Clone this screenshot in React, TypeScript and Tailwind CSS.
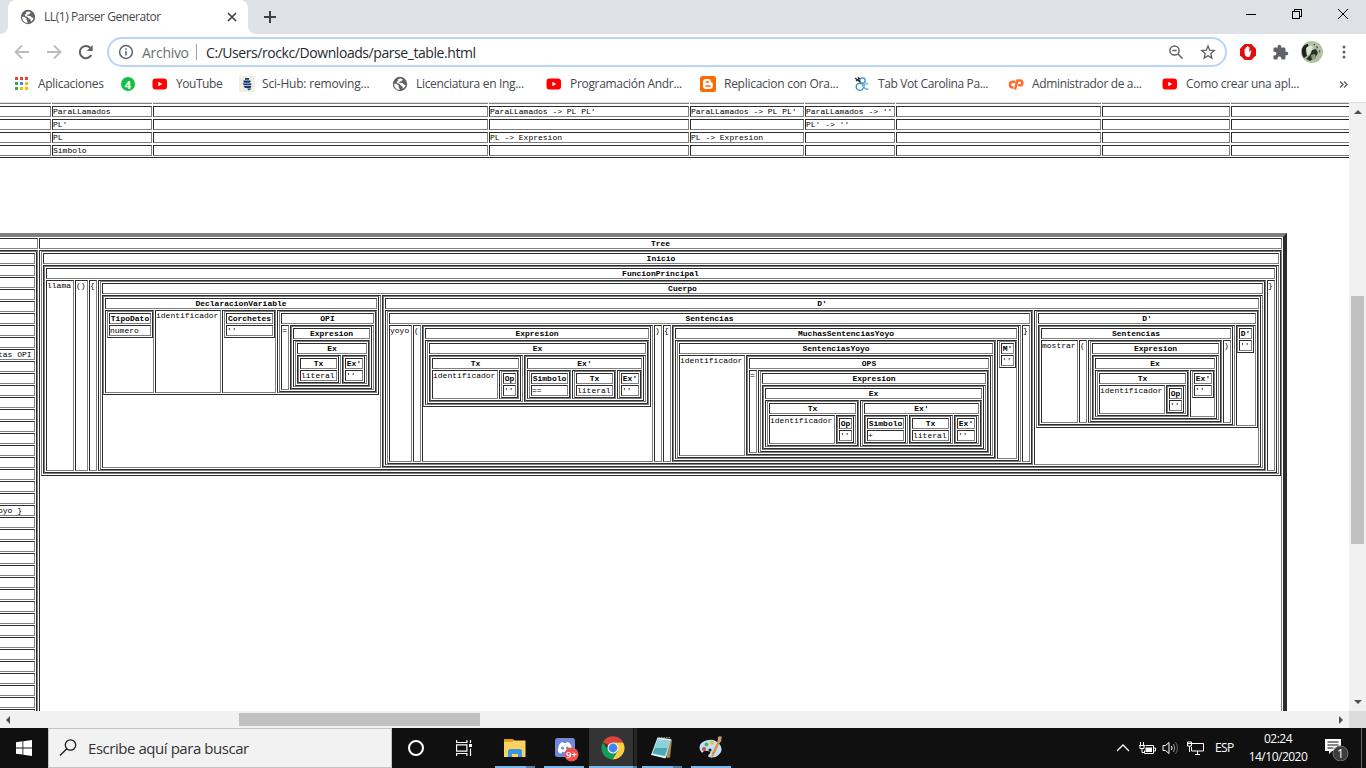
import type { ReactNode } from "react";

type Side = "l" | "r";
type Cell = { w?: number; pad?: Side; c: string | Node };
type Node = { h: string; row: Cell[] };

const leaf = (h: string, t: string): Node => ({ h, row: [{ c: t }] });
const txt = (c: string, w: number): Cell => ({ c, w });
const sub = (pad: Side, h: string, row: Cell[], w?: number): Cell => ({ pad, w, c: { h, row } });
const end = (pad: Side, h: string, t: string, w: number): Cell => ({ pad, w, c: leaf(h, t) });

const tree: Node = {
  h: "Inicio",
  row: [
    sub("r", "FuncionPrincipal", [
      txt("llama", 28),
      txt("()", 13),
      txt("{", 8),
      sub("l", "Cuerpo", [
        sub("r", "DeclaracionVariable", [
          end("l", "TipoDato", "numero", 49),
          txt("identificador", 66),
          end("l", "Corchetes", "''", 54),
          sub("l", "OPI", [
            txt("=", 8),
            sub("r", "Expresion", [
              sub("l", "Ex", [end("r", "Tx", "literal", 44), end("r", "Ex'", "''", 25)]),
            ], 84),
          ], 100),
        ], 279),
        sub("r", "D'", [
          sub("l", "Sentencias", [
            txt("yoyo", 23),
            txt("(", 8),
            sub("r", "Expresion", [
              sub("l", "Ex", [
                sub("r", "Tx", [txt("identificador", 66), end("l", "Op", "''", 20)], 94),
                sub("r", "Ex'", [
                  end("l", "Simbolo", "==", 44),
                  end("l", "Tx", "literal", 44),
                  end("l", "Ex'", "''", 25),
                ], 122),
              ]),
            ], 231),
            txt(")", 8),
            txt("{", 8),
            sub("r", "MuchasSentenciasYoyo", [
              sub("l", "SentenciasYoyo", [
                txt("identificador", 66),
                sub("r", "OPS", [
                  txt("=", 8),
                  sub("l", "Expresion", [
                    sub("r", "Ex", [
                      sub("l", "Tx", [txt("identificador", 66), end("r", "Op", "''", 20)], 94),
                      sub("l", "Ex'", [
                        end("r", "Simbolo", "+", 44),
                        end("r", "Tx", "literal", 44),
                        end("r", "Ex'", "''", 25),
                      ], 122),
                    ]),
                  ], 231),
                ], 247),
              ], 321),
              end("l", "M'", "''", 20),
            ], 349),
            txt("}", 8),
          ], 648),
          sub("l", "D'", [
            sub("r", "Sentencias", [
              txt("mostrar", 37),
              txt("(", 8),
              sub("l", "Expresion", [
                sub("r", "Ex", [
                  sub("l", "Tx", [txt("identificador", 66), end("r", "Op", "''", 20)], 94),
                  end("l", "Ex'", "''", 25),
                ]),
              ], 134),
              txt(")", 8),
            ], 197),
            end("r", "D'", "''", 20),
          ], 225),
        ], 881),
      ], 1168),
      txt("}", 8),
    ]),
  ],
};

const inset = "border border-t-[#2c2c2c] border-l-[#2c2c2c] border-b-[#808080] border-r-[#808080]";
const outset = "border border-t-[#808080] border-l-[#808080] border-b-[#2c2c2c] border-r-[#2c2c2c]";

function Head({ children }: { children: ReactNode }) {
  return <div className={`${inset} h-[11px] text-center font-bold whitespace-nowrap`}>{children}</div>;
}

function NodeTable({ node }: { node: Node }) {
  return (
    <div className={`${outset} flex min-w-0 grow flex-col gap-px self-start p-px`}>
      <Head>{node.h}</Head>
      <div className="flex gap-px">
        {node.row.map((cell, i) => (
          <div
            key={i}
            style={{ width: cell.w }}
            className={`${inset} flex min-h-[11px] ${cell.w ? "shrink-0" : "min-w-0 flex-1"} ${
              cell.pad === "l" ? "pl-px" : cell.pad === "r" ? "pr-px" : ""
            }`}
          >
            {typeof cell.c === "string" ? <span className="whitespace-nowrap">{cell.c}</span> : <NodeTable node={cell.c} />}
          </div>
        ))}
      </div>
    </div>
  );
}

const columns = [61, 100, 335, 200, 114, 90, 205, 128, 130];
const grammar: string[][] = [
  ["", "ParaLLamados", "", "ParaLLamados -> PL PL'", "ParaLLamados -> PL PL'", "ParaLLamados -> ''", "", "", ""],
  ["", "PL'", "", "", "", "PL' -> ''", "", "", ""],
  ["", "PL", "", "PL -> Expresion", "PL -> Expresion", "", "", "", ""],
  ["", "Simbolo", "", "", "", "", "", "", ""],
];

function GrammarTable() {
  return (
    <div className="-ml-[10px] flex w-[1372px] shrink-0 flex-col gap-[2px]">
      <div className="flex h-px gap-px">
        {columns.map((w, i) => (
          <div key={i} style={{ width: w }} className="shrink-0 bg-[#808080]" />
        ))}
      </div>
      {grammar.map((row, r) => (
        <div key={r} className="flex gap-px">
          {row.map((t, i) => (
            <div key={i} style={{ width: columns[i] }} className={`${inset} h-[11px] shrink-0 whitespace-nowrap`}>
              {t}
            </div>
          ))}
        </div>
      ))}
      <div className="-mt-px h-px bg-[#2c2c2c]" />
    </div>
  );
}

const trace = Array.from({ length: 40 }, (_, i) => (i === 8 ? "tas OPI" : i === 21 ? "oyo }" : ""));

function ParseTable() {
  return (
    <div className="mt-[75px] -ml-[10px] flex w-[1297px] shrink-0 flex-col gap-px border-t-4 border-r-4 border-t-[#808080] border-r-[#2c2c2c] p-px pl-0">
      <div className="flex gap-px">
        <div className={`${inset} h-[11px] w-[48px] shrink-0`} />
        <div className="flex-1">
          <Head>Tree</Head>
        </div>
      </div>
      <div className="flex gap-px">
        <div className={`${inset} w-[48px] shrink-0`}>
          <div className={`${outset} flex flex-col gap-px p-px pl-0`}>
            {trace.map((t, i) => (
              <div key={i} className={`${inset} h-[11px] pl-[5px] whitespace-nowrap`}>
                {t}
              </div>
            ))}
          </div>
        </div>
        <div className={`${inset} flex flex-1 pl-px`}>
          <NodeTable node={tree} />
        </div>
      </div>
    </div>
  );
}

function Globe() {
  return (
    <svg viewBox="0 0 16 16" className="size-4">
      <circle cx="8" cy="8" r="7.2" fill="#5f6368" />
      <path d="M2.2 7.4 5 8.2l1.8 1.5-.3 1.3 1.2 1.9-.2 1C4.4 13.8 2 11.300 2.200 7.400Z" fill="#fff" />
      <path d="M6.200 3.100 9 2.400l1.800 1L9.500 5.200l-2 .4-.4 1.200 3.200.2 1.500 1.600 1.700.3c-.3 1.700-1.300 3-2.700 3.800l-.4-2.400-1.900-1-1.100-1.500-2.200-.5-.6-1.600 1.500-.9Z" fill="#fff" />
    </svg>
  );
}

function YouTube() {
  return (
    <svg viewBox="0 0 16 16" className="size-4">
      <rect x="0.500" y="2.500" width="14.500" height="11" rx="3" fill="#f00" />
      <path d="M6.300 5.700v4.600L10.300 8Z" fill="#fff" />
    </svg>
  );
}

function Apps() {
  const c = ["#ea4335", "#ea4335", "#ea4335", "#34a853", "#4285f4", "#fbbc04", "#34a853", "#fbbc04", "#fbbc04"];
  return (
    <svg viewBox="0 0 16 16" className="size-4" shapeRendering="crispEdges">
      {c.map((f, i) => (
        <rect key={i} x={(i % 3) * 5} y={1 + Math.floor(i / 3) * 5} width="3" height="3" fill={f} />
      ))}
    </svg>
  );
}

function Whats() {
  return (
    <div className="flex size-[14px] items-center justify-center rounded-full bg-[#11bf42] font-['Open_Sans',sans-serif] text-[11px] leading-none font-bold text-white">4</div>
  );
}

function SciHub() {
  return (
    <svg viewBox="0 0 16 16" className="size-4">
      <path fill="#f0efe2" d="M0 0h16v16H0Z" />
      <path d="M6 2h4v1.800H6ZM4.500 4.500h7v1.800l-1 .4h-6ZM3.500 7.500h9L12 9.300H5ZM4.500 10h8l-1 1.900H6ZM8 12.500h4.500L10 14.500Z" fill="#14357a" />
    </svg>
  );
}

function Blogger() {
  return (
    <svg viewBox="0 0 16 16" className="size-4">
      <rect width="16" height="16" rx="2.500" fill="#ff6a00" />
      <path d="M6 3h2.500C10.500 3 11 4.500 11 6c0 .700 1.800 0 1.800 1.500V10c0 2-1 3-3 3H6c-2 0-3-1-3-3V6c0-2 1-3 3-3Z" fill="#fff" />
      <path d="M6 6h2.500M6 10h4" stroke="#ff6a00" strokeWidth="1.400" strokeLinecap="round" />
    </svg>
  );
}

function TabVot() {
  return (
    <svg viewBox="0 0 16 16" className="size-4" fill="none">
      <circle cx="8.500" cy="4.500" r="2.700" stroke="#3a8fc4" strokeWidth="1.300" />
      <circle cx="5.800" cy="10.800" r="3.600" stroke="#3a8fc4" strokeWidth="1.400" />
      <path d="M14.500 8.300a2.700 2.700 0 1 0 0 4.200M9 8l1 5" stroke="#6bb2dc" strokeWidth="1.300" />
      <path d="m1 2 5 4M2 5l4-3M4 1l2 5" stroke="#333" strokeWidth="1.200" />
    </svg>
  );
}

function CPanel() {
  return (
    <svg viewBox="0 0 16 16" className="size-4" fill="none" stroke="#ff6c2c" strokeWidth="2.500">
      <path d="M7.500 5.800H4.300a2.900 2.900 0 0 0 0 5.700h1.200M7 13.500 9.500 4.500H12a2.400 2.400 0 0 1 0 4.800h-1.800" />
    </svg>
  );
}

const bookmarks: { icon: ReactNode; label: string; box: string; text: string }[] = [
  { icon: <Apps />, label: "Aplicaciones", box: "w-[106px]", text: "ml-[7px] tracking-[-0.3px]" },
  { icon: <Whats />, label: "", box: "w-[31px]", text: "" },
  { icon: <YouTube />, label: "YouTube", box: "w-[87px]", text: "ml-2 tracking-[-0.45px]" },
  { icon: <SciHub />, label: "Sci-Hub: removing...", box: "w-[153px]", text: "ml-[7px] tracking-[-0.2px]" },
  { icon: <Globe />, label: "Licenciatura en Ing...", box: "w-[154px]", text: "ml-2 tracking-[-0.32px]" },
  { icon: <YouTube />, label: "Programación Andr...", box: "w-[154px]", text: "ml-2 tracking-[-0.32px]" },
  { icon: <Blogger />, label: "Replicacion con Ora...", box: "w-[154px]", text: "ml-2 tracking-[-0.27px]" },
  { icon: <TabVot />, label: "Tab Vot Carolina Pa...", box: "w-[154px]", text: "ml-2 tracking-[-0.38px]" },
  { icon: <CPanel />, label: "Administrador de a...", box: "w-[154px]", text: "ml-2 tracking-[-0.35px]" },
  { icon: <YouTube />, label: "Como crear una apl...", box: "w-[177px]", text: "ml-2 tracking-[-0.3px]" },
];

function TabStrip() {
  return (
    <div className="flex h-[34px] shrink-0 bg-[#dee1e6]">
      <div className="flex w-2 items-end bg-white">
        <div className="h-full w-2 rounded-br-lg bg-[#dee1e6]" />
      </div>
      <div className="bg-[#dee1e6]">
        <div className="flex h-[34px] w-[240px] items-center rounded-t-lg bg-white pl-3">
          <Globe />
          <span className="ml-2 w-[183px] text-[12px] tracking-[-0.44px] whitespace-nowrap text-[#45494d]">LL(1) Parser Generator</span>
          <svg viewBox="0 0 10 10" className="size-[10px] shrink-0" stroke="#3c4043" strokeWidth="1.700">
            <path d="m1 1 8 8M9 1 1 9" />
          </svg>
        </div>
      </div>
      <div className="w-2 bg-white">
        <div className="h-full rounded-bl-lg bg-[#dee1e6]" />
      </div>
      <svg viewBox="0 0 12 12" className="mt-[11px] ml-2 size-3" stroke="#3c4043" strokeWidth="2" shapeRendering="crispEdges">
        <path d="M6 0v12M0 6h12" />
      </svg>
      <div className="ml-auto flex pt-[9px] pr-[18px]">
        <svg viewBox="0 0 10 10" className="mr-9 size-[10px]" stroke="#000" shapeRendering="crispEdges">
          <path d="M0 5.500h10" />
        </svg>
        <svg viewBox="0 0 10 10" className="mr-9 size-[10px]" stroke="#000" fill="none" shapeRendering="crispEdges">
          <path d="M.5 2.500h7v7h-7ZM2.500 2.500v-2h7v7h-2" />
        </svg>
        <svg viewBox="0 0 10 10" className="size-[10px]" stroke="#000">
          <path d="m0 0 10 10M10 0 0 10" />
        </svg>
      </div>
    </div>
  );
}

function Toolbar() {
  return (
    <div className="flex h-[36px] shrink-0 items-center bg-white pl-[14px]">
      <svg viewBox="0 0 16 16" className="size-4" fill="none" stroke="#babcbe" strokeWidth="1.800">
        <path d="M15 8H2M8 1.500 1.500 8 8 14.500" />
      </svg>
      <svg viewBox="0 0 16 16" className="ml-4 size-4" fill="none" stroke="#babcbe" strokeWidth="1.800">
        <path d="M1 8h13M8 1.500 14.500 8 8 14.500" />
      </svg>
      <svg viewBox="0 0 16 16" className="ml-4 size-4" fill="none">
        <path d="M13.300 11A6.100 6.100 0 1 1 12.300 3.800" stroke="#5f6368" strokeWidth="2" />
        <path d="M14.700 1v6H8.700Z" fill="#5f6368" />
      </svg>
      <div className="ml-[13px] flex h-[30px] w-[1120px] items-center rounded-full border-2 border-[#b9d4f9] pl-[9px]">
        <svg viewBox="0 0 16 16" className="size-4" fill="none" stroke="#5f6368" strokeWidth="1.500">
          <circle cx="8" cy="8" r="6.400" />
          <path d="M8 7v4.500M8 4.300v1.500" />
        </svg>
        <span className="ml-2 w-[47px] text-[14px] tracking-[-0.3px] text-[#6b6f73]">Archivo</span>
        <span className="mx-[7px] h-4 w-px bg-[#9aa0a6]" />
        <span className="ml-[2px] text-[14px] tracking-[-0.43px] whitespace-nowrap text-[#26292d]">C:/Users/rockc/Downloads/parse_table.html</span>
        <svg viewBox="0 0 16 16" className="ml-auto size-4" fill="none" stroke="#5f6368" strokeWidth="1.500">
          <circle cx="6.500" cy="6.500" r="4.600" />
          <path d="m10 10 4.500 4.500M4.300 6.500h4.400" />
        </svg>
        <svg viewBox="0 0 16 16" className="mr-[9px] ml-4 size-4" fill="none" stroke="#5f6368" strokeWidth="1.400">
          <path d="m8 2 1.700 4.200 4.500.4-3.400 3 1 4.400L8 11.700 4.200 14l1-4.400-3.400-3 4.500-.4Z" />
        </svg>
      </div>
      <svg viewBox="0 0 16 16" className="ml-[13px] size-4">
        <path d="M4.700 0h6.600L16 4.700v6.600L11.300 16H4.700L0 11.300V4.700Z" fill="#e40d0d" />
        <path d="M4.600 8.500V5q.6-.8 1.200 0v2.300-4q.6-.8 1.200 0v3.500-4.300q.6-.8 1.200 0v4.300-3.700q.6-.8 1.200 0v5.200l1-1.500q1-.6 1 .3L9.800 12.500q-1.200 1-3.400.3-1.800-1-1.800-4.300Z" fill="#fff" />
      </svg>
      <svg viewBox="0 0 24 24" className="ml-4 size-[17px]" fill="#5f6368">
        <path d="M20.500 11H19V7a2 2 0 0 0-2-2h-4V3.500a2.500 2.500 0 0 0-5 0V5H4a2 2 0 0 0-2 2v3.800h1.500a2.700 2.700 0 0 1 0 5.400H2V20a2 2 0 0 0 2 2h3.800v-1.500a2.700 2.700 0 0 1 5.400 0V22H17a2 2 0 0 0 2-2v-4h1.500a2.500 2.500 0 0 0 0-5Z" />
      </svg>
      <svg viewBox="0 0 22 22" className="ml-[12px] size-[22px]">
        <circle cx="11" cy="11" r="11" fill="#b4c2a2" />
        <path d="M1 8q2-5 6-5l1 4-3 2 1 6-3 2q-3-4-2-9Z" fill="#1c2420" />
        <path d="M5 7q4-4 7-1l-1 6-5 2Z" fill="#dde4cf" />
        <path d="m11 9 4-1 2 4-3 5-5 3-4-2 4-4Z" fill="#28332b" />
        <path d="m15 5 2 1-1 2ZM12 3h2v1.500ZM18 9l1.500 1-1 2Z" fill="#303b32" />
        <path d="m10 14 4-1 1 4-4 2Z" fill="#8c9b78" />
      </svg>
      <svg viewBox="0 0 4 14" className="ml-[19px] h-[14px] w-1" fill="#5f6368">
        <circle cx="2" cy="2" r="1.500" />
        <circle cx="2" cy="7" r="1.500" />
        <circle cx="2" cy="12" r="1.500" />
      </svg>
    </div>
  );
}

function Bookmarks() {
  return (
    <div className="flex h-[33px] shrink-0 items-center border-b border-[#dcdee0] bg-white pb-1 pl-[15px] text-[12px] text-[#45494d]">
      {bookmarks.map((b, i) => (
        <div key={i} className={`flex shrink-0 items-center ${b.box}`}>
          {b.icon}
          <span className={`whitespace-nowrap ${b.text}`}>{b.label}</span>
        </div>
      ))}
      <svg viewBox="0 0 9 7" className="h-[7px] w-[9px]" fill="none" stroke="#5f6368" strokeWidth="1.500">
        <path d="m1 .5 3 3-3 3M5 .5l3 3-3 3" />
      </svg>
    </div>
  );
}

function Taskbar() {
  return (
    <div className="flex h-10 shrink-0 items-stretch bg-[#101010] text-white">
      <div className="flex w-12 items-center justify-center">
        <svg viewBox="0 0 16 16" className="size-4" fill="#fff">
          <path d="M0 2.200 6.500 1.300v6.200H0ZM7.300 1.200 16 0v7.500H7.300ZM0 8.400h6.500v6.200L0 13.700ZM7.300 8.400H16V16l-8.700-1.200Z" />
        </svg>
      </div>
      <div className="flex w-[344px] items-center border border-[#c4c4c4] bg-[#f2f2f2] pl-[10px]">
        <svg viewBox="0 0 18 18" className="size-[18px]" fill="none" stroke="#1c1c1c" strokeWidth="1.300">
          <circle cx="11.500" cy="6" r="5.200" />
          <path d="M7.800 9.700 1 16.500" />
        </svg>
        <span className="ml-[11px] text-[15px] tracking-[-0.45px] whitespace-nowrap text-[#333]">Escribe aquí para buscar</span>
      </div>
      <div className="flex w-12 items-center justify-center">
        <div className="size-4 rounded-full border-2 border-white" />
      </div>
      <div className="flex w-12 items-center justify-center">
        <svg viewBox="0 0 16 16" className="size-4" fill="none" stroke="#fff" strokeWidth="1.200">
          <path d="M.6 0v2.500h10.300V0M.6 4.800h10.300v6.400H.6ZM.6 16v-2.500h10.300V16M14.500 0v3M14.500 8.500V16" />
          <path d="M13 4h3v3h-3Z" fill="#fff" stroke="none" />
        </svg>
      </div>
      <div className="ml-[7px] flex w-10 flex-col items-center">
        <svg viewBox="0 0 22 18" className="mt-[11px] h-[18px] w-[22px]">
          <path d="M0 0h9l1 1.500h11.500V18H0Z" fill="#f9d262" />
          <path d="M0 0h9v2.700H0Z" fill="#e29a08" />
          <path d="M4 18v-6.500L5.500 10h11l1.500 1.500V18h-4v-3H8v3Z" fill="#3a96dd" />
        </svg>
        <div className="mt-auto flex h-[2px] w-full bg-[#76b9ed]"><div className="ml-auto w-[9px] bg-[#5582a5]" /></div>
      </div>
      <div className="ml-[9px] flex w-10 flex-col items-center">
        <svg viewBox="0 0 24 24" className="mt-[10px] ml-[5px] size-6">
          <rect x="0" y="0" width="20" height="19" rx="2.500" fill="#7289da" />
          <path d="M4 7q1.500-3 4-3l.6 1h2.800l.6-1q2.500 0 4 3 1.500 4 1 7-1.500 1.500-3.500 1.500l-1-1.500h-5l-1 1.500Q4.500 15.500 3 14q-.5-3 1-7Z" fill="#fff" />
          <circle cx="7.600" cy="10" r="1.500" fill="#7289da" />
          <circle cx="12.400" cy="10" r="1.500" fill="#7289da" />
          <circle cx="16.500" cy="16.500" r="7" fill="#f04f51" />
          <text x="16.500" y="20" textAnchor="middle" fontSize="9.500" fill="#fff" className="font-['Open_Sans',sans-serif] font-semibold">9+</text>
        </svg>
        <div className="mt-auto h-[2px] w-full bg-[#76b9ed]" />
      </div>
      <div className="ml-[5px] flex w-12 flex-col items-center bg-[linear-gradient(to_right,#343434_44px,#101010_44px,#101010_45px,#262626_45px)]">
        <svg viewBox="0 0 24 24" className="mt-2 size-6">
          <path d="M12 12 2 5.900A11.500 11.500 0 0 1 22.100 6.500H12Z" fill="#db4437" />
          <path d="M22.100 6.500A11.500 11.500 0 0 1 11.500 23.500L16.800 14.800 12 6.500Z" fill="#ffcd40" />
          <path d="M2 6.200A11.500 11.500 0 0 0 11.500 23.500l5.200-8.700-9.500 0Z" fill="#0f9d58" />
          <circle cx="12" cy="12" r="5.600" fill="#f1f1f1" />
          <circle cx="12" cy="12" r="4.400" fill="#4285f4" />
        </svg>
        <div className="mt-auto flex h-[2px] w-full bg-[#76b9ed]"><div className="ml-auto w-[4px] bg-[#5582a5]" /></div>
      </div>
      <div className="ml-[5px] flex w-10 flex-col items-center">
        <svg viewBox="0 0 24 24" className="mt-2 size-6">
          <path d="m8 2 14 1.500-2 18-3 .5Z" fill="#a8895a" />
          <path d="M7.500 1.500 21 3 15.500 22.500 1 19Z" fill="#d9eef0" />
          <path d="M8 3.500 20 5l-5 15L2.500 17.500Z" fill="#4ba9b6" />
          <path d="M8 3.500 20 5l-2.500 7L5 12Z" fill="#8ed2da" />
          <path d="M8.500 1.500h12" stroke="#888" strokeDasharray="1.500 1" />
        </svg>
        <div className="mt-auto flex h-[2px] w-full bg-[#76b9ed]"><div className="ml-auto w-[9px] bg-[#5582a5]" /></div>
      </div>
      <div className="ml-[9px] flex w-10 flex-col items-center">
        <svg viewBox="0 0 24 24" className="mt-2 size-6">
          <path d="M1 14Q-1 7 7 4.500T20 7.500Q25 13 20.500 18T10 21q-2-1 .5-3t-1.500-3-5 1-3-2Z" fill="#bfe0f5" />
          <circle cx="5" cy="13" r="2" fill="#e0413a" />
          <circle cx="7.500" cy="8.500" r="2" fill="#55b559" />
          <circle cx="13" cy="6.800" r="2" fill="#f5b82e" />
          <circle cx="11" cy="14" r="1.600" fill="#16242e" />
          <path d="m12 23 1-6 6-12 2 1-5.500 12Z" fill="#e58e31" />
          <path d="m18.500 6 .5-5q2-1.500 4 0l-1 3 .5 1-2 2Z" fill="#c99c6b" />
        </svg>
        <div className="mt-auto h-[2px] w-full bg-[#76b9ed]" />
      </div>
      <div className="ml-auto flex items-center">
        <svg viewBox="0 0 14 8" className="h-2 w-[14px]" fill="none" stroke="#fff" strokeWidth="1.300">
          <path d="m1 7 6-6 6 6" />
        </svg>
        <svg viewBox="0 0 17 14" className="ml-[9px] h-[14px] w-[17px]" fill="none" stroke="#fff">
          <path d="M1.500 1v3M4.500 1v3M0 4.500h6M1 5v2.500h4V5M3 8v3.500h2M6.500 4.500h8v8h-9v-3M14.500 7h2v3h-2" />
          <path d="M6.500 6.500H13V11H6.500Z" fill="#fff" stroke="none" />
        </svg>
        <svg viewBox="0 0 17 16" className="ml-[6px] h-4 w-[17px]" fill="none" stroke="#fff">
          <path d="M1 5.500h2.500l3.500-3v11l-3.500-3H1Z" />
          <path d="M9.500 6q1 2 0 4" />
          <path d="M11.500 4q2.500 4 0 8" stroke="#999" />
          <path d="M13.500 2q4 6 0 12" stroke="#666" />
        </svg>
        <svg viewBox="0 0 17 14" className="ml-[8px] h-[14px] w-[17px]" fill="none" stroke="#fff">
          <path d="M5 2.500h11.500v7.500H4.500V6M8 13.500h5M10.500 10v3M.5 1h4v4h-4ZM2.500 5v6M1 2.500h3" />
        </svg>
        <span className="ml-[11px] w-[20px] text-[12px] tracking-[-0.6px]">ESP</span>
        <div className="ml-[13px] flex w-[60px] flex-col items-center text-[12px] leading-[18px] tracking-[-0.5px]">
          <span>02:24</span>
          <span>14/10/2020</span>
        </div>
        <svg viewBox="0 0 26 26" className="ml-[15px] size-[26px]">
          <path d="M2 4h16v12H9l-3 3v-3H2Z" fill="#fff" />
          <path d="M4.500 7h11M4.500 10h11M4.500 13h6" stroke="#101010" />
          <circle cx="17.500" cy="18.500" r="7.500" fill="#3c3c3c" stroke="#777" />
          <text x="17.500" y="23" textAnchor="middle" fontSize="12" fill="#fff">1</text>
        </svg>
        <div className="ml-[12px] h-10 w-px bg-[#666]" />
        <div className="w-1" />
      </div>
    </div>
  );
}

export default function App() {
  return (
    <div className="flex h-[768px] w-[1366px] flex-col overflow-hidden bg-white font-['Open_Sans','Noto_Sans',sans-serif]">
      <TabStrip />
      <Toolbar />
      <Bookmarks />
      <div className="flex h-[608px] shrink-0">
        <div className="flex w-[1349px] flex-col overflow-hidden bg-white font-['Liberation_Mono',monospace] text-[8px] leading-[9px] text-black">
          <GrammarTable />
          <ParseTable />
        </div>
        <div className="flex w-[17px] flex-col items-center bg-[#f1f1f1] py-[5px]">
          <svg viewBox="0 0 8 4" className="mt-[2px] h-1 w-2" fill="#505050"><path d="m4 0 4 4H0Z" /></svg>
          <div className="mt-[182px] h-[248px] w-[13px] bg-[#c1c1c1]" />
          <svg viewBox="0 0 8 4" className="mt-auto mb-[2px] h-1 w-2" fill="#505050"><path d="m4 4 4-4H0Z" /></svg>
        </div>
      </div>
      <div className="flex h-[17px] shrink-0 items-center bg-[#f1f1f1] pl-[6px]">
        <svg viewBox="0 0 4 8" className="h-2 w-1" fill="#505050"><path d="m0 4 4-4v8Z" /></svg>
        <div className="ml-[229px] h-[13px] w-[241px] bg-[#c1c1c1]" />
        <svg viewBox="0 0 4 8" className="mr-[6px] ml-auto h-2 w-1" fill="#505050"><path d="m4 4-4-4v8Z" /></svg>
        <div className="h-[17px] w-[17px] bg-[#dcdcdc]" />
      </div>
      <Taskbar />
    </div>
  );
}
